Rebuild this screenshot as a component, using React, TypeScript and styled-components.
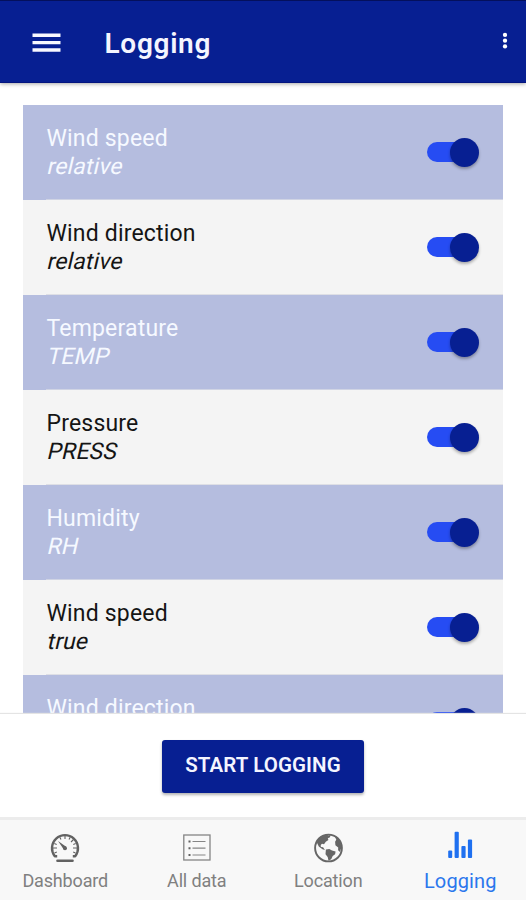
import React from 'react';
import styled, { createGlobalStyle } from 'styled-components';

const GlobalStyle = createGlobalStyle`
  * { box-sizing: border-box; }
  body { margin: 0; background: #fff; font-family: Roboto, sans-serif; }
`;

const Screen = styled.div`
  width: 526px;
  height: 900px;
  display: flex;
  flex-direction: column;
  overflow: hidden;
  background: #fff;
`;

const Header = styled.header`
  flex: none;
  height: 83px;
  display: flex;
  align-items: center;
  padding: 2px 17px 0 32px;
  background: #071f92;
  border-top: 1px solid #04105c;
  border-bottom: 1px solid #04157f;
  box-shadow: 0 1px 4px rgba(0, 0, 0, 0.35);
  z-index: 1;
`;

const IconButton = styled.button<{ $lift?: number }>`
  display: flex;
  padding: 0 0 ${(p) => p.$lift ?? 0}px;
  border: 0;
  background: none;
`;

const Title = styled.h1`
  flex: 1;
  margin: 2px 0 0 43.5px;
  color: #f4f5ff;
  font-size: 28px;
  line-height: 34px;
  font-weight: 600;
  letter-spacing: 0.7px;
`;

const List = styled.main`
  flex: none;
  height: 631px;
  padding: 22.4px 23.5px 0 23px;
  overflow: hidden;
`;

const Row = styled.div<{ $tinted: boolean }>`
  height: 95px;
  display: flex;
  align-items: center;
  justify-content: space-between;
  padding: 0.2px 23.5px 0 23.5px;
  background: ${(p) => (p.$tinted ? '#b5bddf' : '#f4f4f4')};
  background-image: linear-gradient(${(p) => (p.$tinted ? '#d0d4e4, #d0d4e4' : '#dedfe5, #dedfe5')});
  background-size: calc(100% - 23px) 1px;
  background-position: right bottom;
  background-repeat: no-repeat;
  color: ${(p) => (p.$tinted ? '#f6f9ff' : '#151515')};
`;

const Label = styled.div`
  font-size: 23px;
  line-height: 28px;
  letter-spacing: 0.18px;
`;

/* Slanted upright letterforms, pivoting on the baseline. */
const Channel = styled.em`
  display: block;
  width: max-content;
  margin-left: -1px;
  font-style: normal;
  letter-spacing: 0.12px;
  transform: skewX(-13deg);
  transform-origin: 0 22px;
`;

const Track = styled.span`
  width: 50px;
  height: 20px;
  margin: 0 2.5px 1.4px 0;
  display: flex;
  align-items: center;
  justify-content: flex-end;
  border-radius: 10px;
  background: #264cf3;
`;

const Thumb = styled.span`
  flex: none;
  width: 29px;
  height: 29px;
  margin-right: -2.5px;
  border-radius: 50%;
  background: #071f92;
  box-shadow: 0 2px 3px rgba(0, 0, 0, 0.3);
`;

const Actions = styled.section`
  flex: none;
  height: 103px;
  display: flex;
  justify-content: center;
  align-items: flex-start;
  padding-top: 26px;
  background: #fff;
  box-shadow: 0 -1px 1px #e4e4e4;
`;

const StartButton = styled.button`
  width: 202px;
  height: 53px;
  padding: 0 0 3px;
  border: 0;
  border-radius: 3px;
  background: #071f92;
  color: #f4f5ff;
  font: 600 20.5px Roboto, sans-serif;
  letter-spacing: 0.1px;
  white-space: nowrap;
  box-shadow: 0 2px 3px rgba(0, 0, 0, 0.3);
`;

const Tabs = styled.nav`
  flex: 1;
  display: grid;
  grid-template-columns: repeat(4, 1fr);
  background: #f8f8f8;
  border-top: 3px solid #ececec;
`;

const Tab = styled.a<{ $active?: boolean }>`
  display: flex;
  flex-direction: column;
  align-items: center;
  padding-top: 11px;
  margin-left: ${(p) => (p.$active ? '0' : '-1px')};
  color: ${(p) => (p.$active ? '#2b77ed' : '#808080')};
  font-size: ${(p) => (p.$active ? '20px' : '18px')};
  line-height: 32px;
  letter-spacing: ${(p) => (p.$active ? '0.1px' : '-0.15px')};
`;

const MenuIcon = () => (
  <svg width="29" height="20" viewBox="0 0 29 20" fill="none" stroke="#f8f8ff" strokeWidth="3.4">
    <path d="M.5 2.2h28M.5 9.6h28M.5 17h28" />
  </svg>
);

const MoreIcon = () => (
  <svg width="8" height="18" viewBox="0 0 8 18" fill="#fff">
    <circle cx="4" cy="2.9" r="2.15" />
    <circle cx="4" cy="8.7" r="2.15" />
    <circle cx="4" cy="14.4" r="2.15" />
  </svg>
);

const GaugeIcon = () => (
  <svg width="32" height="34" viewBox="0 0 32 34" fill="none" stroke="#626262">
    <path d="M8.2 25.2H5.8A13 13 0 1 1 26.2 25.2H23.8" strokeWidth="2.4" strokeLinejoin="round" />
    <path d="M16 4v4M4 17h4M24 17h4M24.5 8.5 22 11M10.8 6.2l1.2 2.4M21.2 6.2 20 8.6M5.3 12.4l2.4 1M26.7 12.4l-2.4 1M5.5 22l2.3-1M26.5 22l-2.3-1" strokeWidth="1.1" />
    <path d="m9 10 8.2 5.7-2.4 2.7Z" fill="#626262" stroke="none" />
    <circle cx="16" cy="17.2" r="2" fill="#626262" stroke="none" />
    <path d="M8.5 29.8h15" strokeWidth="2.6" strokeLinecap="round" />
  </svg>
);

const ListIcon = () => (
  <svg width="32" height="34" viewBox="0 0 32 34" fill="none" stroke="#858585">
    <rect x="2.8" y="4" width="26.2" height="25" strokeWidth="1.3" />
    <path d="M11.5 10.5h13M11.5 17.2h13M11.5 24h13" strokeWidth="1.2" />
    <path d="M7.5 10.5h2M7.5 17.2h2M7.5 24h2" stroke="#626262" strokeWidth="2" />
  </svg>
);

const GlobeIcon = () => (
  <svg width="32" height="34" viewBox="0 0 32 34">
    <circle cx="16.5" cy="17" r="13.4" fill="none" stroke="#666" strokeWidth="1.9" />
    <path
      fill="#666"
      transform="translate(.5)"
      d="M4.6 10.2C6.7 6.5 10.2 4 14 3.4l2 1 2.1-.5-.6 2.4-2.2 1 .6 1.7-2.6 1.8-1.8 2.5-2-.6-1.3 1.2.2 2 2.2.3 1.8 2.8-2.4-.8-3.7-2.8-2-3.8ZM13.4 18.6l3.4-.6 2.7 1.5 3.6 1-.5 2.8-2.4 1.8-1.5 3.1-2.7 1.6-.8-3.8-2.2-2.7.4-4.7ZM22.2 5.2c4 2 6.6 6.3 6.7 11l-1.4 4.8-1.9-1.7.1-2.9-2.8-2.2-.3-3.4 1.2-2.1Z"
    />
  </svg>
);

const ChartIcon = () => (
  <svg width="32" height="34" viewBox="0 0 32 34" fill="#1f70f0">
    <rect x="4.2" y="19.5" width="4" height="7.5" rx="1" />
    <rect x="10.6" y="0.8" width="4.2" height="26.2" rx="1" />
    <rect x="17.4" y="15" width="4.2" height="12" rx="1" />
    <rect x="23.9" y="8.5" width="4.2" height="18.5" rx="1" />
  </svg>
);

const channels = [
  ['Wind speed', 'relative'],
  ['Wind direction', 'relative'],
  ['Temperature', 'TEMP'],
  ['Pressure', 'PRESS'],
  ['Humidity', 'RH'],
  ['Wind speed', 'true'],
  ['Wind direction', 'true'],
];

export default function App() {
  return (
    <Screen>
      <GlobalStyle />
      <Header>
        <IconButton aria-label="Menu"><MenuIcon /></IconButton>
        <Title>Logging</Title>
        <IconButton aria-label="More" $lift={3}><MoreIcon /></IconButton>
      </Header>
      <List>
        {channels.map(([name, channel], i) => (
          <Row key={name + channel} $tinted={i % 2 === 0}>
            <Label>{name}<Channel>{channel}</Channel></Label>
            <Track><Thumb /></Track>
          </Row>
        ))}
      </List>
      <Actions><StartButton>START LOGGING</StartButton></Actions>
      <Tabs>
        <Tab><GaugeIcon />Dashboard</Tab>
        <Tab><ListIcon />All data</Tab>
        <Tab><GlobeIcon />Location</Tab>
        <Tab $active><ChartIcon />Logging</Tab>
      </Tabs>
    </Screen>
  );
}
